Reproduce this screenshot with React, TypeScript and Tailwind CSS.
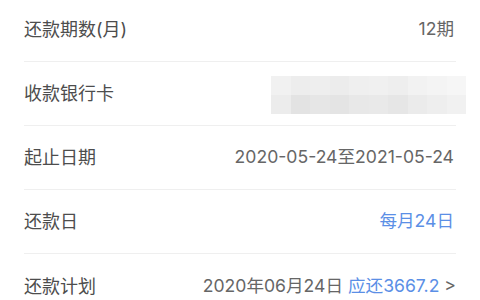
const font = {
  fontFamily: 'Inter, "Noto Sans CJK SC", sans-serif',
};

const mosaic = [
  ['#f1f1f1', '#ededed', '#eeeeee', '#ececec', '#efefef', '#f0f0f0', '#eeeeee', '#f2f2f2', '#f4f4f4', '#f6f6f6'],
  ['#ececec', '#e3e3e3', '#e6e6e6', '#e4e4e4', '#e8e8e8', '#e9e9e9', '#e6e6e6', '#ebebeb', '#eeeeee', '#f1f1f1'],
];

function Row({ label, children, last = false }: { label: string; children: React.ReactNode; last?: boolean }) {
  return (
    <div className={last ? 'h-[64px]' : 'h-[64px] border-b border-[#efefef]'}>
      <div className="flex h-full items-center justify-between">
        <span className="text-[18px] text-[#4d4d4d]">{label}</span>
        {children}
      </div>
    </div>
  );
}

export default function App() {
  return (
    <div className="w-[480px] h-[300px] overflow-hidden bg-white" style={font}>
      <div className="mx-6 -mt-[2px]">
        <Row label="还款期数(月)">
          <span className="text-[17.6px] text-[#666] mr-[2px]">12期</span>
        </Row>
        <Row label="收款银行卡">
          <div className="grid grid-cols-10 w-[195px] h-[38px] -mr-[10px] mt-[3px]">
            {mosaic.flat().map((c, i) => (
              <div key={i} style={{ backgroundColor: c }} />
            ))}
          </div>
        </Row>
        <Row label="起止日期">
          <span className="text-[17.6px] text-[#666] mr-[2px]">2020-05-24至2021-05-24</span>
        </Row>
        <Row label="还款日">
          <span className="text-[17.6px] text-[#5b8fe6] mr-[2px]">每月24日</span>
        </Row>
        <Row label="还款计划" last>
          <span className="text-[17.6px] text-[#666]">
            2020年06月24日 <span className="text-[#5b8fe6]">应还3667.2</span> &gt;
          </span>
        </Row>
      </div>
    </div>
  );
}
